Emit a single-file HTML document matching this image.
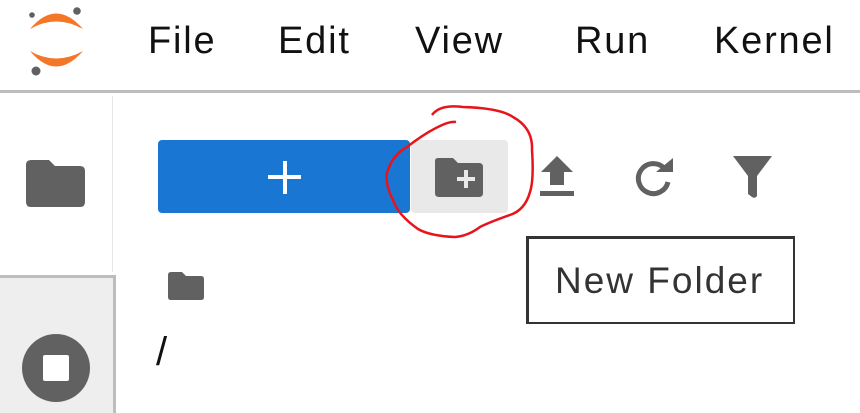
<!DOCTYPE html>
<html><head><style>
body{margin:0;width:860px;height:410px;overflow:hidden;background:#fff;position:relative;font-family:"Liberation Sans","DejaVu Sans",sans-serif}
.a{position:absolute}
.m{position:absolute;top:22px;font-size:38px;color:#111;line-height:1;letter-spacing:1.8px}
</style></head><body>
<svg class="a" style="left:0;top:0" width="120" height="90" viewBox="0 0 120 90">
<path d="M30 29 Q56 -2 83 29 Q56 14 30 29Z" fill="#f37726"/>
<path d="M30 51 Q56 82 83 51 Q56 66 30 51Z" fill="#f37726"/>
<circle cx="77" cy="11" r="3.8" fill="#616161"/>
<circle cx="32" cy="15" r="2.8" fill="#616161"/>
<circle cx="36" cy="71" r="4.5" fill="#616161"/>
</svg>
<div class="m" style="left:148px">File</div>
<div class="m" style="left:278px">Edit</div>
<div class="m" style="left:415px">View</div>
<div class="m" style="left:575px">Run</div>
<div class="m" style="left:714px">Kernel</div>
<div class="a" style="left:0;top:90px;width:860px;height:3px;background:#bdbdbd"></div>
<div class="a" style="left:112px;top:96px;width:1px;height:176px;background:#e6e6e6"></div>
<div class="a" style="left:0;top:275px;width:113px;height:135px;background:#eeeeee;border-top:3px solid #bdbdbd;border-right:3px solid #bdbdbd"></div>
<svg class="a" style="left:26px;top:160px" width="60" height="48"><path d="M5 0H23L29 6H54Q59 6 59 11V42Q59 47 54 47H5Q0 47 0 42V5Q0 0 5 0Z" fill="#616161"/></svg>
<svg class="a" style="left:22px;top:334px" width="70" height="70"><circle cx="34" cy="34" r="34" fill="#616161"/><rect x="21" y="21" width="26" height="26" rx="2" fill="#fff"/></svg>
<div class="a" style="left:158px;top:140px;width:252px;height:73px;background:#1976d2;border-radius:4px"></div>
<div class="a" style="left:268px;top:161px;width:33px;height:33px"><div class="a" style="left:15px;top:0;width:4px;height:33px;background:#fff"></div><div class="a" style="left:0;top:14px;width:33px;height:4px;background:#fff"></div></div>
<div class="a" style="left:411px;top:140px;width:97px;height:73px;background:#e9e9e9;border-radius:4px"></div>
<svg class="a" style="left:435px;top:158px" width="50" height="40"><path d="M3 0H18L23 5H44Q48 5 48 9V35Q48 39 44 39H4Q0 39 0 35V3Q0 0 3 0Z" fill="#616161"/><rect x="29" y="12" width="4" height="18" fill="#e9e9e9"/><rect x="22" y="19" width="18" height="4" fill="#e9e9e9"/></svg>
<svg class="a" style="left:540px;top:156px" width="34" height="42"><path d="M17 0L33 16H24V29H10V16H1Z" fill="#616161"/><rect x="0" y="35" width="34" height="5" fill="#616161"/></svg>
<svg class="a" style="left:634px;top:156px" width="42" height="42"><path d="M30 12A15 15 0 1 0 34 26" fill="none" stroke="#616161" stroke-width="5"/><path d="M22 16H39V2Z" fill="#616161"/></svg>
<svg class="a" style="left:733px;top:156px" width="40" height="44"><path d="M0 0H39L24 20V40Q22 43 19 41L15 38V20Z" fill="#616161"/></svg>
<svg class="a" style="left:168px;top:272px" width="36" height="29"><path d="M3 0H14L18 4H33Q36 4 36 7V25Q36 28 33 28H3Q0 28 0 25V3Q0 0 3 0Z" fill="#616161"/></svg>
<div class="a" style="left:156px;top:332px;font-size:40px;color:#111;line-height:1">/</div>
<div class="a" style="left:526px;top:236px;width:264px;height:83px;border:3px solid #333;border-bottom-width:2px;border-right-width:2px;background:#fff"></div>
<div class="a" style="left:555px;top:262px;font-size:37px;color:#333;line-height:1;letter-spacing:2px">New Folder</div>
<svg class="a" style="left:0;top:0" width="860" height="410"><path d="M432 115 Q440 104 463 107 Q500 108 513 117 Q533 128 532 150 Q534 180 530 192 Q525 210 510 215 Q490 222 480 227 Q468 236 455 237 Q430 236 418 229 Q398 215 393 200 Q385 185 387 173 Q392 155 407 147 Q425 133 440 126 Q450 121 456 122" fill="none" stroke="#e8141c" stroke-width="2.5"/></svg>
</body></html>
